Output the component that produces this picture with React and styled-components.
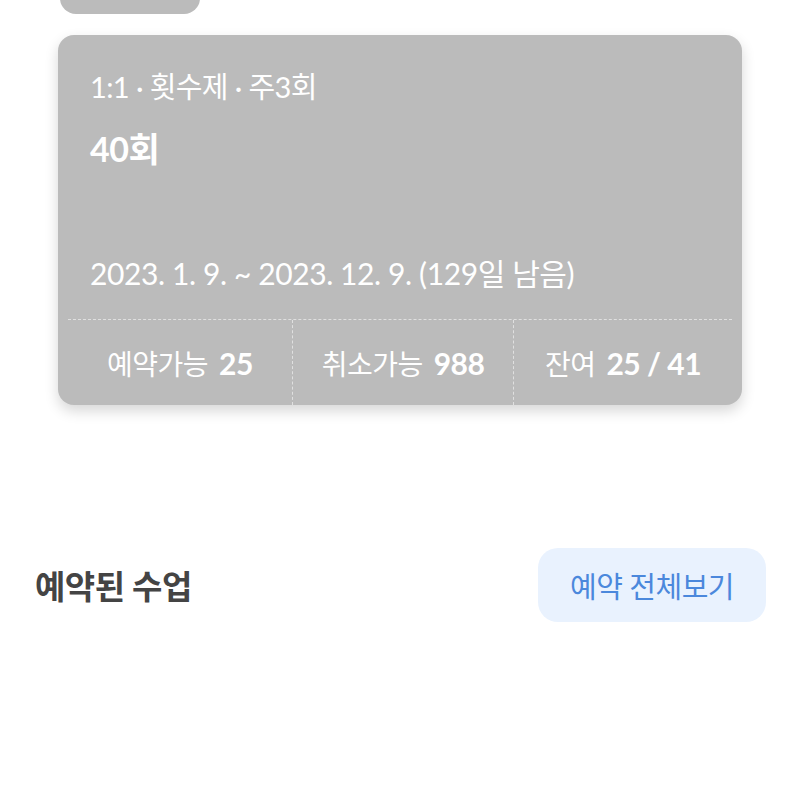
import React from "react";
import styled, { createGlobalStyle } from "styled-components";

const GlobalStyle = createGlobalStyle`
  html, body {
    margin: 0;
    padding: 0;
    background: #ffffff;
    font-family: Lato, "Noto Sans CJK KR", sans-serif;
  }
  * { box-sizing: border-box; }
`;

const Page = styled.div`
  width: 800px;
  height: 800px;
  overflow: hidden;
  display: flex;
  flex-direction: column;
`;

const TopPill = styled.div`
  margin: -30px 0 0 60px;
  width: 140px;
  height: 44px;
  border-radius: 16px;
  background: #bbbbbb;
`;

const Card = styled.section`
  margin: 21px 0 0 58px;
  width: 684px;
  height: 370px;
  border-radius: 16px;
  background: #bbbbbb;
  box-shadow: 0 6px 14px rgba(0, 0, 0, 0.16);
  display: flex;
  flex-direction: column;
  color: #ffffff;
`;

const CardBody = styled.div`
  flex: 1;
  padding: 33px 32px 0;
  display: flex;
  flex-direction: column;
`;

const Meta = styled.div`
  font-size: 29px;
  font-weight: 400;
  line-height: 38px;
  letter-spacing: -0.6px;
`;

const Count = styled.div`
  margin-top: 23px;
  font-size: 34px;
  font-weight: 700;
  line-height: 40px;
  letter-spacing: -0.5px;
`;

const Period = styled.div`
  margin-top: auto;
  margin-bottom: 27px;
  font-size: 30px;
  line-height: 38px;
  letter-spacing: -0.4px;
`;

const Stats = styled.div`
  margin: 0 10px;
  height: 86px;
  border-top: 1px dashed rgba(255, 255, 255, 0.55);
  display: grid;
  grid-template-columns: 224px 221px 1fr;
`;

const Stat = styled.div`
  display: flex;
  align-items: center;
  justify-content: center;
  gap: 11px;
  font-size: 28px;
  letter-spacing: -0.5px;
  border-left: ${({ $first }) => ($first ? "none" : "1px dashed rgba(255, 255, 255, 0.55)")};

  b {
    font-weight: 700;
    font-size: 30px;
  }
`;

const Section = styled.div`
  margin-top: 143px;
  padding: 0 34px 0 35px;
  display: flex;
  align-items: center;
  justify-content: space-between;
`;

const Heading = styled.h2`
  margin: 0;
  font-size: 33px;
  font-weight: 700;
  color: #444444;
  letter-spacing: -0.5px;
`;

const AllButton = styled.button`
  width: 228px;
  height: 74px;
  border: none;
  border-radius: 20px;
  background: #e9f2fe;
  color: #4b88dc;
  font-family: inherit;
  font-size: 29px;
  letter-spacing: -0.5px;
  cursor: pointer;
`;

const stats = [
  { label: "예약가능", value: "25" },
  { label: "취소가능", value: "988" },
  { label: "잔여", value: "25 / 41" },
];

export default function App() {
  return (
    <Page>
      <GlobalStyle />
      <TopPill />
      <Card>
        <CardBody>
          <Meta>1:1 · 횟수제 · 주3회</Meta>
          <Count>40회</Count>
          <Period>2023. 1. 9. ~ 2023. 12. 9. (129일 남음)</Period>
        </CardBody>
        <Stats>
          {stats.map((s, i) => (
            <Stat key={s.label} $first={i === 0}>
              <span>{s.label}</span>
              <b>{s.value}</b>
            </Stat>
          ))}
        </Stats>
      </Card>
      <Section>
        <Heading>예약된 수업</Heading>
        <AllButton>예약 전체보기</AllButton>
      </Section>
    </Page>
  );
}
